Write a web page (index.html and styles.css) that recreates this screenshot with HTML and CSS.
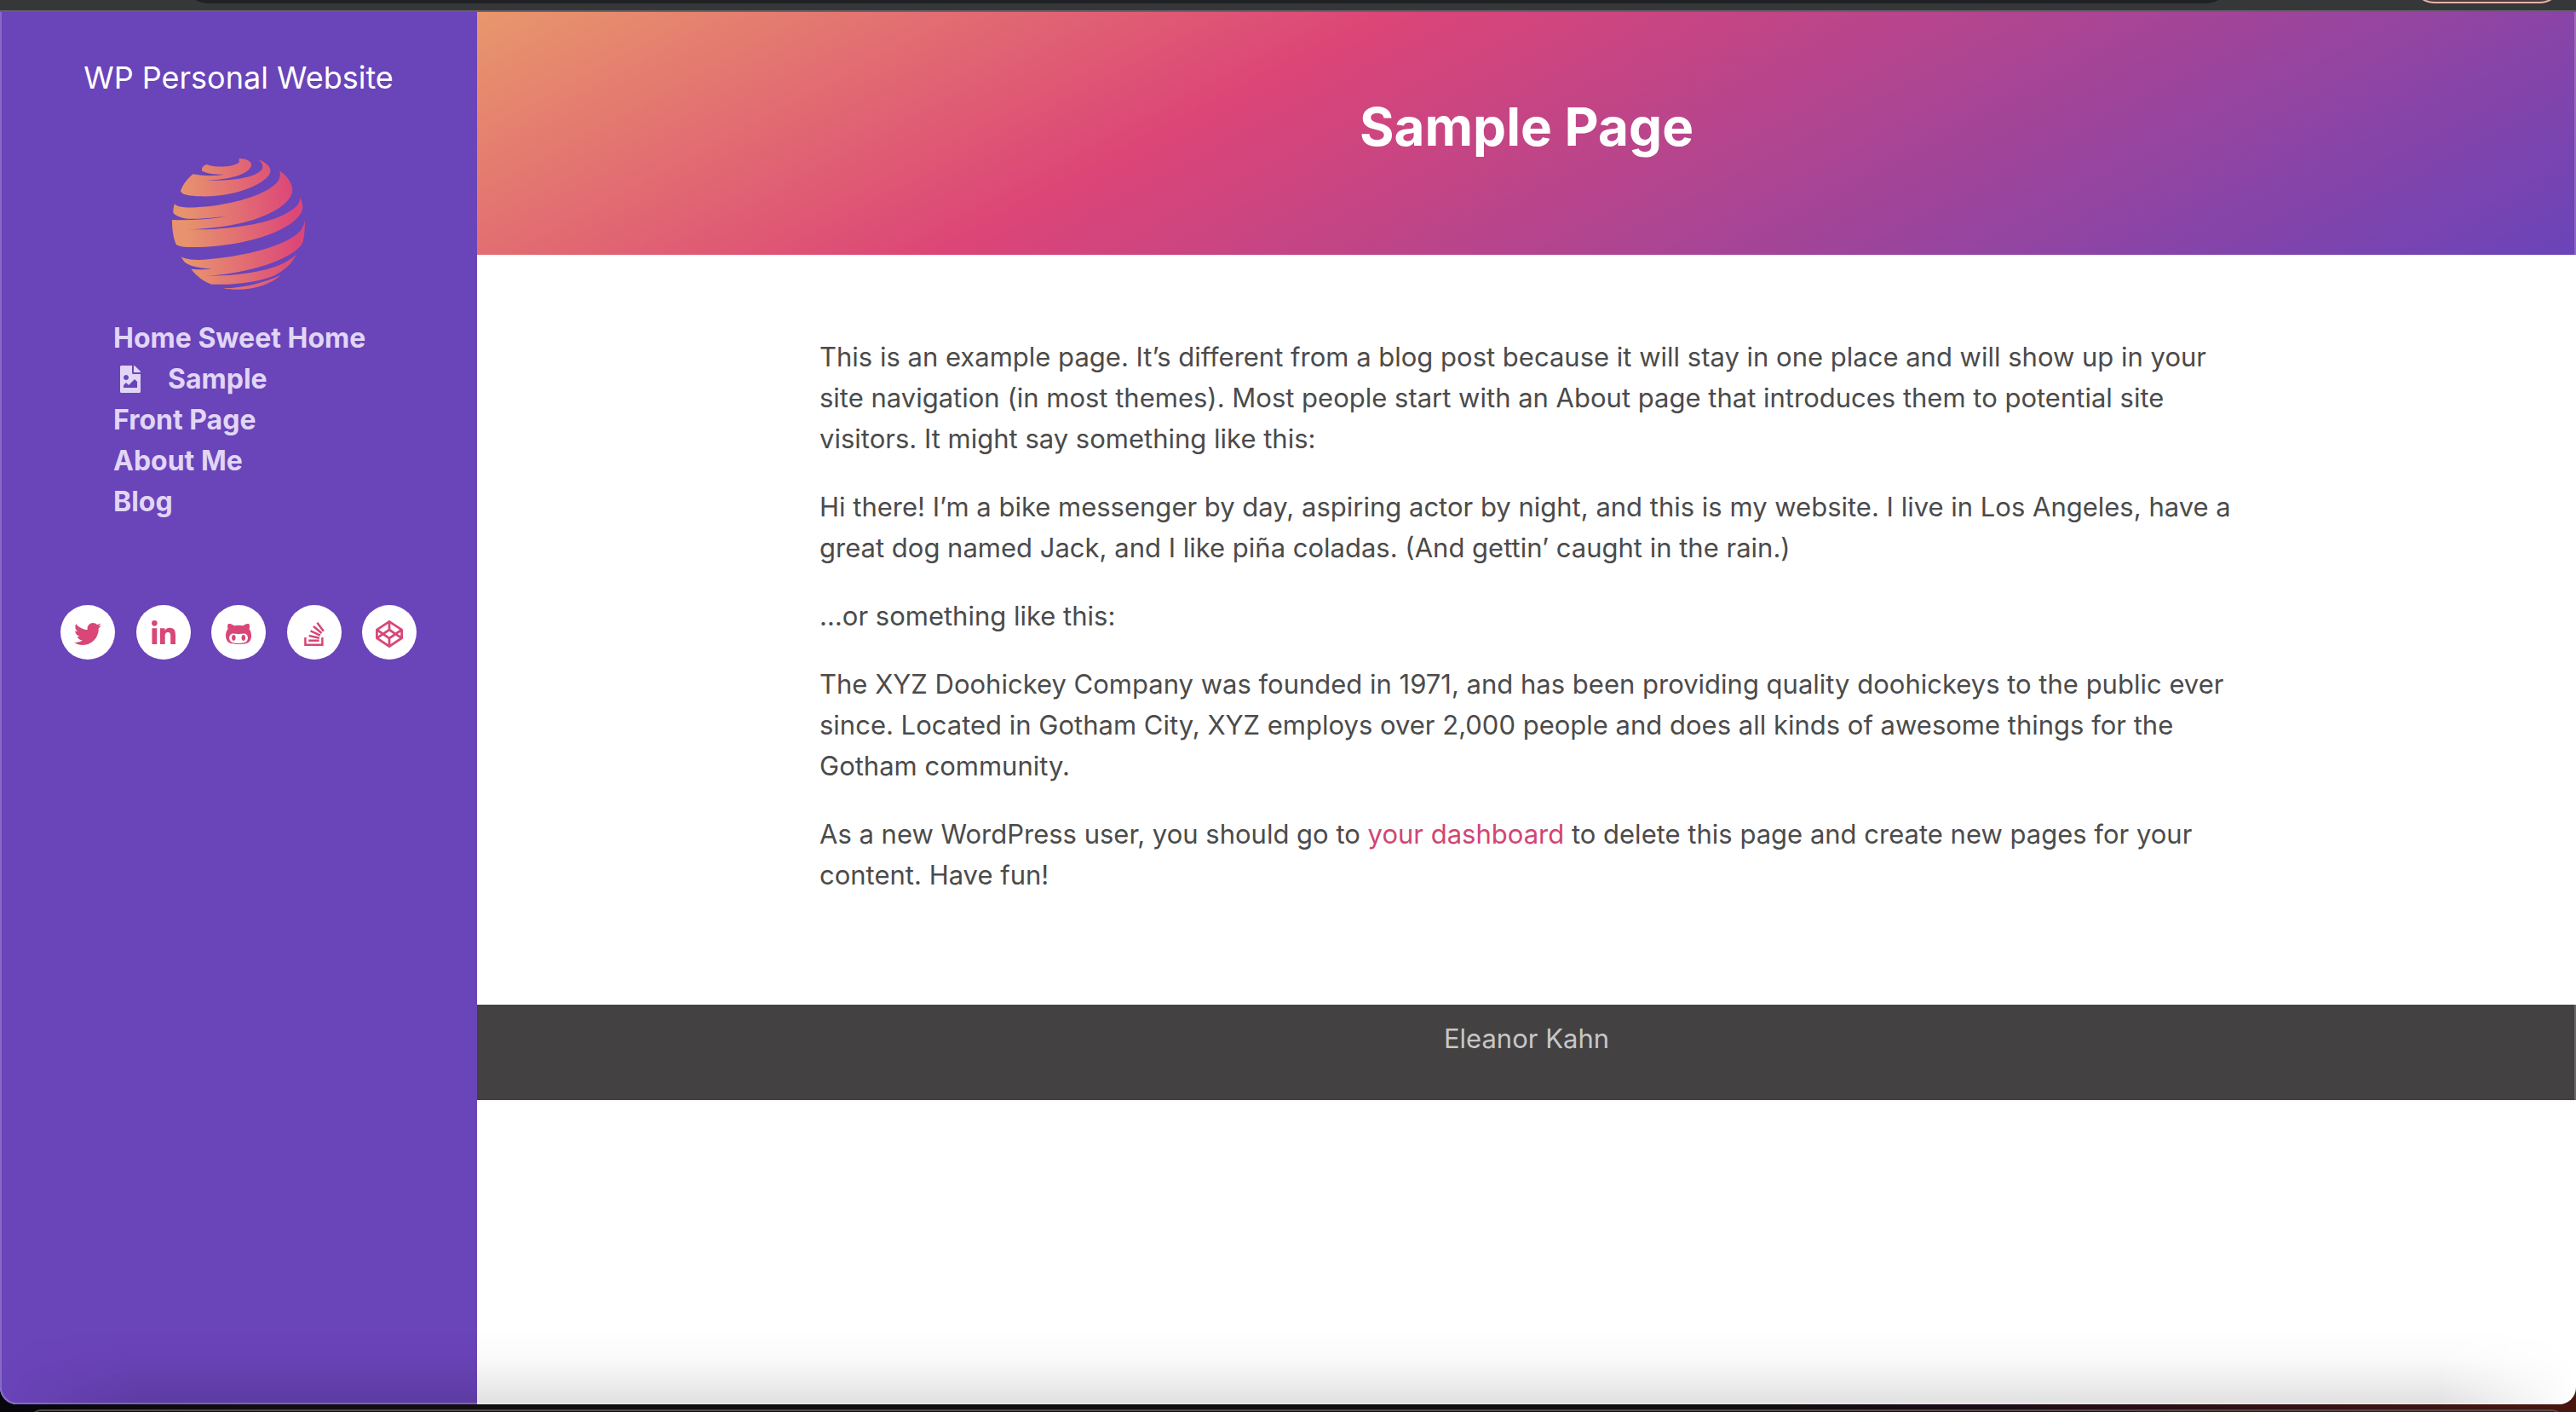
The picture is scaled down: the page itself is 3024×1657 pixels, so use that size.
FILE: index.html
```html
<!DOCTYPE html>
<html lang="en">
<head>
<meta charset="utf-8">
<title>Sample Page - WP Personal Website</title>
<link rel="stylesheet" href="styles.css">
</head>
<body>
<div class="toolbar" aria-hidden="true">
  <span class="address-bar"></span>
  <span class="update-pill"></span>
</div>
<div class="window">
  <header class="sidebar">
    <h2 class="site-title"><a href="#">WP Personal Website</a></h2>
    <svg class="logo" viewBox="60 42 480 480" role="img" aria-label="Site logo">
      <defs>
        <linearGradient id="warm" gradientUnits="userSpaceOnUse" x1="66" y1="280" x2="500" y2="240">
          <stop offset="0.1" stop-color="#e7946e"/>
          <stop offset="1" stop-color="#dd4678"/>
        </linearGradient>
      </defs>
      <g fill="url(#warm)">
        <path d="M188 69C220 82 280 78 302 62L302 48C330 48 348 60 345 72C340 100 280 122 185 125C270 128 350 118 380 90C390 76 384 62 370 52C400 62 416 82 412 95C405 130 300 185 165 181C130 180 98 176 96 162C104 140 120 118 140 103C180 111 220 110 250 104C220 104 190 102 172 92C168 82 176 72 188 69Z"/>
        <path d="M75 208C84 222 130 222 160 219C280 212 400 175 438 130C448 115 448 100 444 90C470 108 490 135 490 160C488 215 370 290 120 298C300 300 420 270 470 240C505 220 518 205 516 185C528 205 528 225 520 240C480 310 300 362 130 360C100 359 86 356 80 350C68 320 66 290 66 264C130 267 210 262 265 250C200 258 150 262 120 260C90 256 72 246 70 238C70 225 72 215 75 208Z"/>
        <path d="M97 394C120 406 160 407 200 402C340 390 480 350 520 300C530 285 533 275 533 262C535 290 532 320 526 344C500 400 330 455 185 461C330 462 430 435 470 410C490 398 500 390 504 384C490 420 455 445 430 458C380 480 300 494 205 491C175 480 150 460 133 437C160 440 185 440 205 436C160 434 120 425 108 410Z"/>
        <path d="M245 505C330 504 400 480 450 458C410 495 330 520 245 505Z"/>
      </g>
    </svg>
    <nav class="main-nav">
      <ul>
        <li><a href="#">Home Sweet Home</a></li>
        <li><a href="#"><svg class="nav-icon" viewBox="0 0 384 512" aria-hidden="true"><path d="M384 121.941V128H256V0h6.059a24 24 0 0 1 16.97 7.029l97.941 97.941a24.002 24.002 0 0 1 7.03 16.971zM248 160c-13.2 0-24-10.8-24-24V0H24C10.745 0 0 10.745 0 24v464c0 13.255 10.745 24 24 24h336c13.255 0 24-10.745 24-24V160H248zm-135.455 16c26.51 0 48 21.49 48 48s-21.49 48-48 48-48-21.49-48-48 21.491-48 48-48zm208 240h-256l.485-48.485L104.545 328c4.686-4.686 11.799-4.201 16.485.485L160.545 368 264.06 264.485c4.686-4.686 12.284-4.686 16.971 0L320.545 304v112z"/></svg>Sample</a></li>
        <li><a href="#">Front Page</a></li>
        <li><a href="#">About Me</a></li>
        <li><a href="#">Blog</a></li>
      </ul>
    </nav>
    <ul class="social">
      <li><a href="#" aria-label="Twitter"><svg viewBox="0 0 512 512"><path d="M459.37 151.716c.325 4.548.325 9.097.325 13.645 0 138.72-105.583 298.558-298.558 298.558-59.452 0-114.68-17.219-161.137-47.106 8.447.974 16.568 1.299 25.34 1.299 49.055 0 94.213-16.568 130.274-44.832-46.132-.975-84.792-31.188-98.112-72.772 6.498.974 12.995 1.624 19.818 1.624 9.421 0 18.843-1.3 27.614-3.573-48.081-9.747-84.143-51.98-84.143-102.985v-1.299c13.969 7.797 30.214 12.67 47.431 13.319-28.264-18.843-46.781-51.005-46.781-87.391 0-19.492 5.197-37.36 14.294-52.954 51.655 63.675 129.3 105.258 216.365 109.807-1.624-7.797-2.599-15.918-2.599-24.04 0-57.828 46.782-104.934 104.934-104.934 30.213 0 57.502 12.67 76.67 33.137 23.715-4.548 46.456-13.32 66.599-25.34-7.798 24.366-24.366 44.833-46.132 57.827 21.117-2.273 41.584-8.122 60.426-16.243-14.292 20.791-32.161 39.308-52.628 54.253z"/></svg></a></li>
      <li><a href="#" aria-label="LinkedIn"><svg viewBox="0 0 448 512"><path d="M100.28 448H7.4V148.9h92.88zM53.79 108.1C24.09 108.1 0 83.5 0 53.8a53.79 53.79 0 0 1 107.58 0c0 29.7-24.1 54.3-53.79 54.3zM447.9 448h-92.68V302.4c0-34.7-.7-79.2-48.29-79.2-48.29 0-55.69 37.7-55.69 76.7V448h-92.78V148.9h89.08v40.8h1.3c12.4-23.5 42.69-48.3 87.88-48.3 94 0 111.28 61.9 111.28 142.3V448z"/></svg></a></li>
      <li><a href="#" aria-label="GitHub"><svg viewBox="0 0 480 512"><path d="M186.1 328.7c0 20.9-10.9 55.1-36.7 55.1s-36.7-34.2-36.7-55.1 10.9-55.1 36.7-55.1 36.7 34.2 36.7 55.1zM480 278.2c0 31.9-3.2 65.7-17.5 95-37.9 76.6-142.1 74.8-216.7 74.8-75.8 0-186.2 2.7-225.6-74.8-14.6-29-20.2-63.1-20.2-95 0-41.9 13.9-81.5 41.5-113.6-5.2-15.8-7.7-32.4-7.7-48.8 0-21.5 4.9-32.3 14.6-51.8 45.3 0 74.3 9 108.8 36 29-6.9 58.8-10 88.7-10 27 0 54.2 2.9 80.4 9.2 34-26.7 63-35.2 107.8-35.2 9.8 19.5 14.6 30.3 14.6 51.8 0 16.4-2.6 32.7-7.7 48.2 27.5 32.4 39 72.3 39 114.2zm-64.3 50.5c0-43.9-26.7-82.6-73.5-82.6-18.9 0-37 3.4-56 6-14.9 2.3-29.8 3.2-45.1 3.2-15.2 0-30.1-.9-45.1-3.2-18.7-2.6-37-6-56-6-46.8 0-73.5 38.7-73.5 82.6 0 87.8 80.4 101.3 150.4 101.3h48.2c70.3 0 150.6-13.4 150.6-101.3zm-82.6-55.1c-25.8 0-36.7 34.2-36.7 55.1s10.9 55.1 36.7 55.1 36.7-34.2 36.7-55.1-10.9-55.1-36.7-55.1z"/></svg></a></li>
      <li><a href="#" aria-label="Stack Overflow"><svg viewBox="0 0 384 512"><path d="M290.7 311L95 269.7 86.8 309l195.7 41zm51-87L188.2 95.7l-25.5 30.8 153.5 128.3zm-31.2 39.7L129.2 179l-16.7 36.5L293.7 300zM262 32l-32 24 119.3 160.3 32-24zm20.5 328h-200v39.7h200zm39.7 80H42.7V320h-40v160h359.5V320h-40z"/></svg></a></li>
      <li><a href="#" aria-label="CodePen"><svg viewBox="0 0 512 512"><path d="M502.285 159.704l-234-156c-7.987-4.915-16.511-4.96-24.571 0l-234 156C3.714 163.703 0 170.847 0 177.989v155.999c0 7.143 3.714 14.286 9.715 18.286l234 156.022c7.987 4.915 16.511 4.96 24.571 0l234-156.022c6-3.999 9.715-11.143 9.715-18.286V177.989c-.001-7.142-3.715-14.286-9.716-18.285zM278 63.131l172.286 114.858-76.857 51.429L278 165.703V63.131zm-44 0v102.572l-95.429 63.715-76.857-51.429L234 63.131zM44 219.132l55.143 36.857L44 292.847v-73.715zm190 229.715L61.714 333.989l76.857-51.429L234 346.275v102.572zm22-140.858l-77.715-52 77.715-52 77.715 52-77.715 52zm22 140.858V346.275l95.429-63.715 76.857 51.429L278 448.847zm190-156l-55.143-36.857L468 219.132v73.715z"/></svg></a></li>
    </ul>
  </header>
  <div class="main">
    <div class="page-header"><h1>Sample Page</h1></div>
    <article class="content">
      <p>This is an example page. It’s different from a blog post because it will stay in one place and will show up in your site navigation (in most themes). Most people start with an About page that introduces them to potential site visitors. It might say something like this:</p>
      <p>Hi there! I’m a bike messenger by day, aspiring actor by night, and this is my website. I live in Los Angeles, have a great dog named Jack, and I like piña coladas. (And gettin’ caught in the rain.)</p>
      <p>…or something like this:</p>
      <p>The XYZ Doohickey Company was founded in 1971, and has been providing quality doohickeys to the public ever since. Located in Gotham City, XYZ employs over 2,000 people and does all kinds of awesome things for the Gotham community.</p>
      <p>As a new WordPress user, you should go to <a href="#">your dashboard</a> to delete this page and create new pages for your content. Have fun!</p>
    </article>
    <footer class="footer">Eleanor Kahn</footer>
  </div>
</div>
<div class="desktop" aria-hidden="true"><div class="dock"></div></div>
</body>
</html>
```

FILE: styles.css
```css
* {
  box-sizing: border-box;
}

body {
  margin: 0;
  min-height: 100vh;
  display: flex;
  flex-direction: column;
  background: linear-gradient(90deg, #05070c, #0f0e10 10%, #0f0e10 68%, #1a0a18 76%, #4a170f);
  color: #4b4b4b;
  font-family: Inter, "Liberation Sans", sans-serif;
  font-size: 31px;
  line-height: 48px;
}

h1, h2, p, ul {
  margin: 0;
  padding: 0;
}

ul {
  list-style: none;
}

a {
  color: #d04674;
  text-decoration: none;
}

/* Lower edge of the browser toolbar; the pills above it are cut off */
.toolbar {
  height: 14px;
  display: flex;
  justify-content: space-between;
  align-items: flex-end;
  padding: 0 15px 8px 216px;
  overflow: hidden;
  background: #353739;
  border-bottom: 2px solid #656068;
}

.address-bar {
  width: 86%;
  height: 56px;
  background: #202124;
  border-radius: 28px;
}

.update-pill {
  width: 179px;
  height: 56px;
  border: 2px solid #e6b0aa;
  background: #4a3c3b;
  border-radius: 28px;
}

.window {
  position: relative;
  flex: 1;
  display: flex;
  overflow: hidden;
  background: #fff;
  border-radius: 0 0 20px 20px;
}

/* Shade over the lower edge of the window, fading at both corners */
.window::before {
  content: "";
  position: absolute;
  inset: auto 0 0;
  height: 88px;
  background: linear-gradient(rgba(0, 0, 0, 0), rgba(0, 0, 0, 0.02) 40%, rgba(0, 0, 0, 0.12));
  -webkit-mask-image: linear-gradient(90deg, transparent, #000 160px, #000 calc(100% - 160px), transparent);
  mask-image: linear-gradient(90deg, transparent, #000 160px, #000 calc(100% - 160px), transparent);
  pointer-events: none;
}

/* Thin light rim of the window */
.window::after {
  content: "";
  position: absolute;
  inset: 0;
  border: 2px solid rgba(255, 255, 255, 0.2);
  border-top: 0;
  border-radius: 0 0 20px 20px;
  pointer-events: none;
}

.sidebar {
  flex: none;
  width: 560px;
  display: flex;
  flex-direction: column;
  align-items: center;
  padding-top: 48px;
  background: #6a44b9;
}

.site-title {
  font-size: 36px;
  font-weight: 400;
  line-height: 58px;
}

.site-title a {
  color: #fff;
}

.logo {
  width: 160px;
  height: 160px;
  margin-top: 64px;
}

.main-nav {
  width: 294px;
  margin-top: 29px;
  font-size: 32px;
  font-weight: 700;
  white-space: nowrap;
}

.main-nav a {
  display: flex;
  align-items: center;
  color: #e1d6f6;
}

.nav-icon {
  width: 40px;
  height: 32px;
  margin-right: 24px;
  fill: currentColor;
}

.social {
  width: 418px;
  display: flex;
  justify-content: space-between;
  margin-top: 97px;
}

.social a {
  display: flex;
  justify-content: center;
  width: 64px;
  height: 64px;
  padding-top: 18px;
  background: #fff;
  border-radius: 50%;
}

.social svg {
  height: 32px;
  fill: #d84777;
}

.main {
  flex: 1;
  min-width: 0;
}

.page-header {
  padding: 96px 32px 112px;
  background: linear-gradient(152deg, #e8976c, #dc4577 36%, #6a44b9);
  color: #fff;
  text-align: center;
}

.page-header h1 {
  font-size: 62px;
  font-weight: 700;
  line-height: 77px;
}

.content {
  max-width: 1724px;
  margin: 0 auto;
  padding: 96px 32px;
}

.content p {
  margin-bottom: 32px;
}

.footer {
  padding: 16px 32px 48px;
  background: #434142;
  color: #c8c6c7;
  text-align: center;
}

.desktop {
  height: 9px;
  padding: 6px 16px 0 36px;
  overflow: hidden;
}

.dock {
  height: 24px;
  border-top: 2px solid #544849;
  border-radius: 12px 12px 0 0;
}
```
